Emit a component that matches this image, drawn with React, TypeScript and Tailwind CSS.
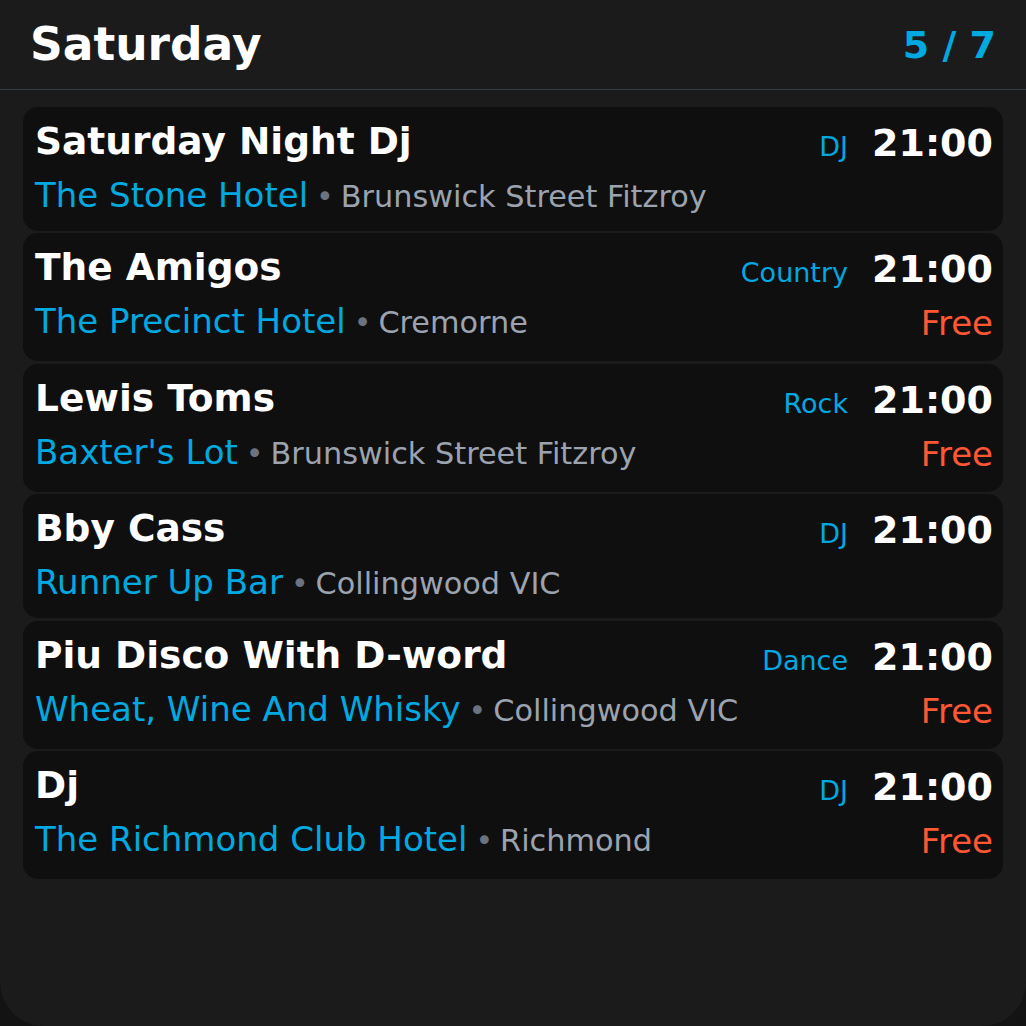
type Gig = {
  title: string;
  venue: string;
  area: string;
  genre: string;
  time: string;
  free?: boolean;
};

const gigs: Gig[] = [
  { title: "Saturday Night Dj", venue: "The Stone Hotel", area: "Brunswick Street Fitzroy", genre: "DJ", time: "21:00" },
  { title: "The Amigos", venue: "The Precinct Hotel", area: "Cremorne", genre: "Country", time: "21:00", free: true },
  { title: "Lewis Toms", venue: "Baxter's Lot", area: "Brunswick Street Fitzroy", genre: "Rock", time: "21:00", free: true },
  { title: "Bby Cass", venue: "Runner Up Bar", area: "Collingwood VIC", genre: "DJ", time: "21:00" },
  { title: "Piu Disco With D-word", venue: "Wheat, Wine And Whisky", area: "Collingwood VIC", genre: "Dance", time: "21:00", free: true },
  { title: "Dj", venue: "The Richmond Club Hotel", area: "Richmond", genre: "DJ", time: "21:00", free: true },
];

function GigCard({ gig }: { gig: Gig }) {
  return (
    <div className="flex items-start justify-between rounded-[15px] bg-[#0f0f0f] pt-[12px] pb-[16px] pl-[12px] pr-[10px]">
      <div className="min-w-0">
        <div className="text-[37.5px] font-bold leading-[45px] text-white">{gig.title}</div>
        <div className="mt-[11px] whitespace-nowrap text-[34px] leading-[40px] text-[#00a9e0]">
          {gig.venue}
          <span className="ml-[8px] text-[30px] leading-none text-[#6b7280]">•</span>
          <span className="ml-[7px] text-[30.3px] leading-none text-[#9ca3af]">{gig.area}</span>
        </div>
      </div>
      <div className="mt-[2px] flex flex-col items-end">
        <div className="flex items-baseline gap-[24px]">
          <span className="text-[27px] leading-none text-[#00a9e0]">{gig.genre}</span>
          <span className="text-[38px] font-bold leading-[45px] text-white">{gig.time}</span>
        </div>
        {gig.free ? (
          <div className="mt-[9px] text-[34px] leading-[44px] text-[#ff5733]">Free</div>
        ) : null}
      </div>
    </div>
  );
}

export default function App() {
  return (
    <div className="h-[1026px] w-[1026px] overflow-hidden bg-[#131313] font-['DejaVu_Sans',sans-serif]">
      <div className="h-full rounded-b-[44px] bg-[#1b1b1b]">
        <header className="flex items-center justify-between border-b-[1.5px] border-[#363c47] px-[30px] pt-[18px] pb-[17px]">
          <h1 className="text-[45.5px] font-bold leading-[54px] text-white">Saturday</h1>
          <span className="text-[38px] font-bold leading-[45px] text-[#00a9e0]">5 / 7</span>
        </header>
        <div className="flex flex-col gap-[2.5px] px-[23px] pt-[16.5px]">
          {gigs.map((g) => (
            <GigCard key={g.title} gig={g} />
          ))}
        </div>
      </div>
    </div>
  );
}
